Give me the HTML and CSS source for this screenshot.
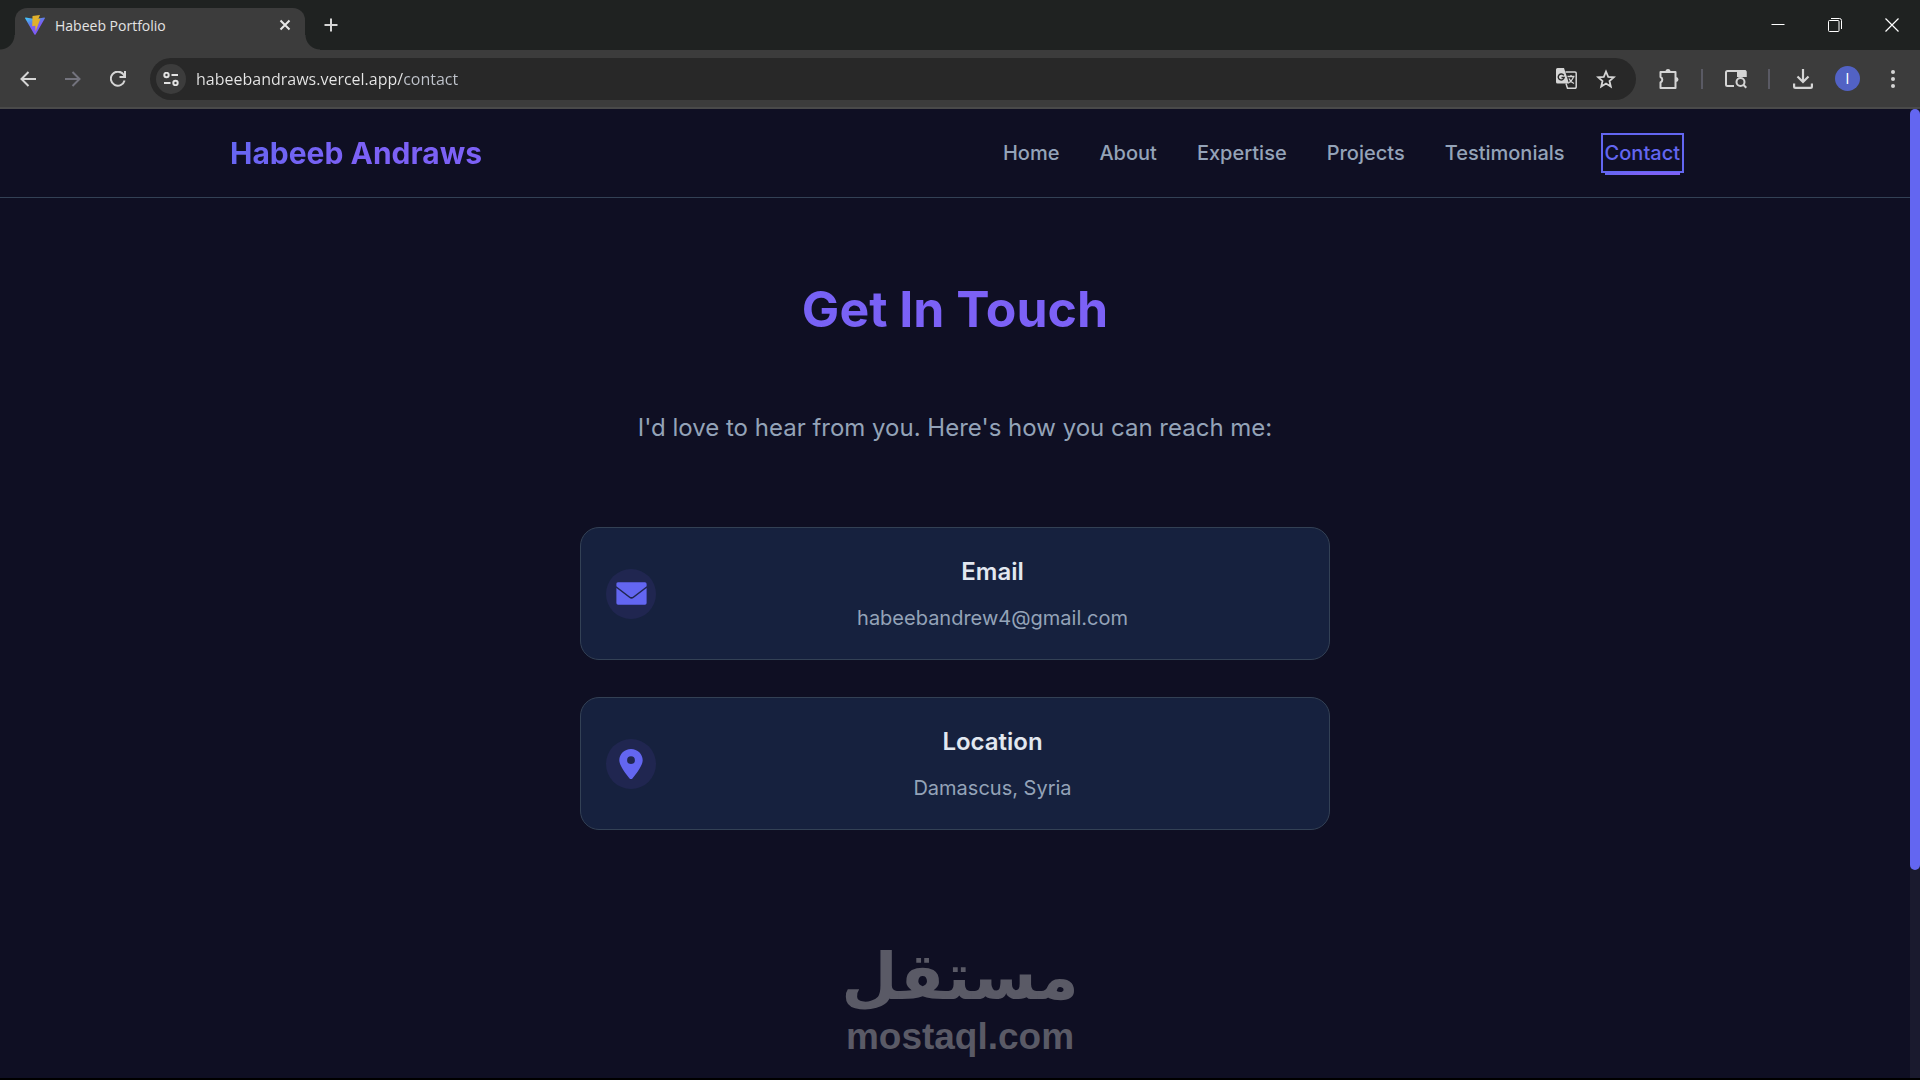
FILE: index.html
```html
<!DOCTYPE html>
<html lang="en">
<head>
    <meta charset="UTF-8">
    <meta name="viewport" content="width=device-width, initial-scale=1.0">
    <title>Habeeb Portfolio</title>
    <link rel="stylesheet" href="styles.css">
</head>
<body>
<div class="browser">
    <div class="tab-strip">
        <div class="tab">
            <svg class="tab-icon" width="20" height="20" viewBox="0 0 20 20">
                <defs>
                    <linearGradient id="vite" x1="0" y1="0" x2="0.5" y2="1">
                        <stop offset="0" stop-color="#41d1ff"/>
                        <stop offset="0.35" stop-color="#5a86e8"/>
                        <stop offset="0.6" stop-color="#7b5cf5"/>
                    </linearGradient>
                </defs>
                <path fill="url(#vite)" d="M0.5 2.5 L10 4 L19.5 2.5 Q20.3 2.5 19.8 3.5 L10.6 19.5 Q10 20.2 9.4 19.5 L0.2 3.5 Q-0.3 2.5 0.5 2.5Z"/>
                <path fill="#e0b02c" d="M7.5 1 L15 0 L13.3 4 L15.5 3.6 L10.5 16.5 L10.3 10.7 L7.2 11.2Z"/>
            </svg>
            <span class="tab-title">Habeeb Portfolio</span>
            <button class="tab-close" aria-label="Close tab">
                <svg width="12" height="12" viewBox="0 0 12 12"><path d="M1.5 1.5l9 9M10.5 1.5l-9 9" stroke="#e8e8e8" stroke-width="2"/></svg>
            </button>
        </div>
        <button class="new-tab" aria-label="New tab">
            <svg width="14" height="14" viewBox="0 0 14 14"><path d="M7 0.5v13M0.5 7h13" stroke="#d5d5d5" stroke-width="2"/></svg>
        </button>
        <div class="window-controls">
            <button aria-label="Minimize"><svg width="14" height="14" viewBox="0 0 14 14"><path d="M0.5 6.5h13" stroke="#fff"/></svg></button>
            <button aria-label="Restore"><svg width="14" height="14" viewBox="0 0 14 14" fill="none" stroke="#fff"><rect x="0.5" y="2.5" width="10.5" height="11" rx="1"/><path d="M3 0.5h8.5a2 2 0 0 1 2 2V11"/></svg></button>
            <button aria-label="Close"><svg width="14" height="14" viewBox="0 0 14 14"><path d="M0.5 0.5l13 13M13.5 0.5l-13 13" stroke="#fff" stroke-width="1.2"/></svg></button>
        </div>
    </div>

    <div class="toolbar">
        <button class="tool" aria-label="Back">
            <svg width="16" height="16" viewBox="0 0 16 16" fill="none" stroke="#d5d5d5" stroke-width="2"><path d="M16 8H1.5M8.5 1l-7 7 7 7"/></svg>
        </button>
        <button class="tool" aria-label="Forward">
            <svg width="16" height="16" viewBox="0 0 16 16" fill="none" stroke="#73737d" stroke-width="2"><path d="M0 8h14.5M7.5 1l7 7-7 7"/></svg>
        </button>
        <button class="tool" aria-label="Reload">
            <svg width="16" height="16" viewBox="0 0 16 16" fill="none" stroke="#d5d5d5" stroke-width="2"><path d="M14.6 9.5A7 7 0 1 1 13.5 3.5L14.5 5"/><path d="M15 0v6H9.5"/></svg>
        </button>
        <div class="omnibox">
            <button class="site-info" aria-label="Site information">
                <svg width="16" height="14" viewBox="0 0 16 14" fill="none" stroke="#e3e3e3" stroke-width="2"><circle cx="3.5" cy="3" r="2.2"/><path d="M8.5 3H15M1 11h6.5"/><circle cx="12.5" cy="11" r="2.2"/></svg>
            </button>
            <input class="url" type="text" aria-label="Address" value="habeebandraws.vercel.app/contact">
            <button class="omni-action" aria-label="Translate">
                <svg width="21" height="21" viewBox="0 0 21 21">
                    <path fill="#d5d5d5" d="M1.5 0H8l5 15.5H1.5A1.5 1.5 0 0 1 0 14V1.5A1.5 1.5 0 0 1 1.5 0Z"/>
                    <path fill="none" stroke="#d5d5d5" stroke-width="1.5" d="M9.5 4H19a1.2 1.2 0 0 1 1.2 1.2V19a1.2 1.2 0 0 1-1.2 1.2h-7.5L10 15.5"/>
                    <path fill="none" stroke="#282828" stroke-width="1.4" d="M7.8 7.4A3 3 0 1 0 8.2 9.5H5.5"/>
                    <path fill="none" stroke="#d5d5d5" stroke-width="1.3" d="M11.5 8.5h7M15 7v1.5M17.5 8.500c-.5 3-3 5-5 6.500M13 10.500c1 2.500 2.500 4 5 5"/>
                </svg>
            </button>
            <button class="omni-action" aria-label="Bookmark">
                <svg width="20" height="20" viewBox="0 0 20 20" fill="none" stroke="#d5d5d5" stroke-width="1.8"><path d="M10 2.5l2.200 5.300 5.600.5-4.300 3.700 1.300 5.600-4.800-3-4.800 3 1.300-5.600L2.200 8.300l5.600-.5Z"/></svg>
            </button>
        </div>
        <button class="tool" aria-label="Extensions">
            <svg width="22" height="22" viewBox="0 0 22 22"><path fill="none" stroke="#d5d5d5" stroke-width="2" stroke-linejoin="round" d="M2.5 4h15v16h-15v-5.500a3 3 0 0 0 0-5.500Z"/><path fill="#d5d5d5" d="M7.500 3.500a2.500 2.500 0 0 1 5 0ZM18 9a2.500 2.500 0 0 1 0 5Z"/></svg>
        </button>
        <span class="divider"></span>
        <button class="tool" aria-label="Side panel search">
            <svg width="22" height="20" viewBox="0 0 22 20" fill="none" stroke="#d5d5d5" stroke-width="2"><path d="M9 17H2.500A1.500 1.500 0 0 1 1 15.500v-12A1.500 1.500 0 0 1 2.500 2H19a1.500 1.500 0 0 1 1.500 1.500V8"/><path fill="#d5d5d5" stroke="none" d="M12 1h8a1.500 1.500 0 0 1 1.500 1.500V8H12Z"/><circle cx="15.500" cy="13" r="4"/><path d="M18.300 15.800l3 3"/></svg>
        </button>
        <span class="divider"></span>
        <button class="tool" aria-label="Downloads">
            <svg width="20" height="20" viewBox="0 0 20 20" fill="none" stroke="#d5d5d5" stroke-width="2.2"><path d="M10 0v13M4.5 7.5L10 13l5.500-5.500M1.100 14.500v3a1.400 1.400 0 0 0 1.400 1.400h15a1.400 1.400 0 0 0 1.400-1.400v-3"/></svg>
        </button>
        <button class="tool" aria-label="Profile"><span class="avatar">I</span></button>
        <button class="tool" aria-label="Menu">
            <svg width="4" height="18" viewBox="0 0 4 18" fill="#d5d5d5"><circle cx="2" cy="2" r="2"/><circle cx="2" cy="9" r="2"/><circle cx="2" cy="16" r="2"/></svg>
        </button>
    </div>

    <div class="viewport">
        <div class="page">
            <header class="header">
                <div class="header-inner">
                    <a href="#" class="logo">Habeeb Andraws</a>
                    <nav class="nav">
                        <a href="#">Home</a>
                        <a href="#">About</a>
                        <a href="#">Expertise</a>
                        <a href="#">Projects</a>
                        <a href="#">Testimonials</a>
                        <a href="#" class="active">Contact</a>
                    </nav>
                </div>
            </header>

            <main class="contact">
                <h1 class="contact-title">Get In Touch</h1>
                <p class="contact-intro">I'd love to hear from you. Here's how you can reach me:</p>

                <div class="contact-list">
                    <div class="contact-card">
                        <span class="contact-icon">
                            <svg width="31" height="31" viewBox="0 0 24 24" fill="currentColor"><path d="M0.3 4.8A1.3 1.3 0 0 1 1.6 3.300h20.800a1.300 1.300 0 0 1 1.300 1.300v1.700l-10.400 8a2.200 2.200 0 0 1-2.600 0L.3 6.300Z"/><path d="M.3 7.700l9.900 7.600a3 3 0 0 0 3.600 0l9.900-7.600v11.700a1.300 1.300 0 0 1-1.300 1.300H1.600a1.300 1.300 0 0 1-1.300-1.300Z"/></svg>
                        </span>
                        <div class="contact-details">
                            <h2>Email</h2>
                            <p>habeebandrew4@gmail.com</p>
                        </div>
                    </div>
                    <div class="contact-card">
                        <span class="contact-icon">
                            <svg width="24" height="30" viewBox="0 0 24 30" fill="currentColor"><path fill-rule="evenodd" d="M12 0C5.400 0 .3 5 .3 11.300c0 5.200 6.300 13.200 10.300 18.200a1.800 1.800 0 0 0 2.800 0c4-5 10.300-13 10.300-18.200C23.700 5 18.600 0 12 0Zm0 7.300a3.900 3.900 0 1 1 0 7.800 3.900 3.900 0 0 1 0-7.800Z"/></svg>
                        </span>
                        <div class="contact-details">
                            <h2>Location</h2>
                            <p>Damascus, Syria</p>
                        </div>
                    </div>
                </div>
            </main>
        </div>
        <div class="scrollbar"><div class="scrollbar-thumb"></div></div>
    </div>

    <div class="watermark">
        <span class="watermark-ar" lang="ar" dir="rtl">مستقل</span>
        <span class="watermark-en">mostaql.com</span>
    </div>
</div>
</body>
</html>
```
FILE: styles.css
```css
:root {
    --primary: #6366f1;
    --secondary: #7c61f6;
    --bg: #0f0f23;
    --card: #16213e;
    --border: #334155;
    --text: #e2e8f0;
    --muted: #94a3b8;
    --chrome-dark: #1f2221;
    --chrome: #3c3c3c;
    --gradient: linear-gradient(135deg, var(--primary), var(--secondary) 50%);
}

* {
    box-sizing: border-box;
    margin: 0;
    padding: 0;
}

body {
    font-family: Inter, "Liberation Sans", sans-serif;
    background: #000;
    color: var(--text);
}

a {
    text-decoration: none;
}

button {
    display: flex;
    align-items: center;
    justify-content: center;
    border: none;
    background: none;
}

/* Browser window */
.browser {
    position: relative;
    display: flex;
    flex-direction: column;
    height: 100vh;
    padding-bottom: 2px;
    overflow: hidden;
}

.tab-strip {
    display: flex;
    height: 50px;
    padding-left: 15px;
    background: var(--chrome-dark);
}

.tab {
    position: relative;
    display: flex;
    align-items: center;
    width: 290px;
    margin-top: 8px;
    padding: 0 10px 8px;
    border-radius: 12px 12px 0 0;
    background: var(--chrome);
}

.tab::before,
.tab::after {
    content: "";
    position: absolute;
    bottom: 0;
    width: 15px;
    height: 15px;
}

.tab::before {
    right: 100%;
    background: radial-gradient(circle at 0 0, transparent 14px, var(--chrome) 15px);
}

.tab::after {
    left: 100%;
    background: radial-gradient(circle at 100% 0, transparent 14px, var(--chrome) 15px);
}

.tab-title {
    flex: 1;
    margin-left: 10px;
    font: 14px "Open Sans", "Noto Sans", sans-serif;
    color: #e3e3e3;
}

.tab-close {
    width: 20px;
    height: 20px;
}

.new-tab {
    width: 30px;
    margin-left: 11px;
}

.window-controls {
    display: flex;
    margin-left: auto;
}

.window-controls button {
    width: 57px;
}

.toolbar {
    display: flex;
    align-items: center;
    height: 59px;
    padding: 0 5px;
    background: var(--chrome);
    border-bottom: 2px solid #4a4a4a;
}

.tool {
    width: 45px;
    height: 42px;
}

.omnibox {
    display: flex;
    align-items: center;
    flex: 1;
    height: 42px;
    margin: 0 10px;
    padding: 0 10px 0 6px;
    border-radius: 21px;
    background: #282828;
}

.site-info {
    width: 30px;
    height: 30px;
    border-radius: 50%;
    background: var(--chrome);
}

.url {
    flex: 1;
    height: 30px;
    margin-left: 10px;
    border: none;
    outline: none;
    font: 16px "Open Sans", "Noto Sans", sans-serif;
    color: transparent;
    /* the path is dimmer than the host */
    background: linear-gradient(to right, #e8e8e8 208px, #c0c4cc 208px);
    background-clip: text;
    -webkit-background-clip: text;
}

.omni-action {
    width: 40px;
    height: 30px;
}

.divider {
    width: 2px;
    height: 20px;
    margin: 0 10px;
    background: #5a5a64;
}

.avatar {
    width: 25px;
    border-radius: 50%;
    background: #5262c4;
    font: 14px/25px Inter, sans-serif;
    color: #fff;
}

/* Page */
.viewport {
    display: flex;
    flex: 1;
    min-height: 0;
    background: var(--bg);
}

.page {
    flex: 1;
}

.header {
    border-bottom: 1px solid var(--border);
}

.header-inner {
    display: flex;
    align-items: center;
    justify-content: space-between;
    max-width: 1500px;
    height: 88px;
    margin: 0 auto;
    padding: 0 25px;
}

.logo {
    font-size: 30px;
    font-weight: 700;
    background: var(--gradient);
    background-clip: text;
    -webkit-background-clip: text;
    color: transparent;
}

.nav {
    display: flex;
    gap: 40px;
}

.nav a {
    position: relative;
    font-size: 20px;
    font-weight: 500;
    line-height: 32px;
    color: var(--muted);
}

.nav .active {
    color: var(--primary);
    outline: 2px solid var(--primary);
    outline-offset: 2px;
}

.nav .active::after {
    content: "";
    position: absolute;
    left: 0;
    bottom: -6px;
    width: 100%;
    height: 3px;
    background: var(--gradient);
}

.contact {
    max-width: 1500px;
    margin: 0 auto;
    padding: 80px 25px;
    text-align: center;
}

.contact-title {
    font-size: 50px;
    font-weight: 700;
    line-height: 62px;
    background: var(--gradient);
    background-clip: text;
    -webkit-background-clip: text;
    color: transparent;
}

.contact-intro {
    margin-top: 68px;
    font-size: 24px;
    line-height: 40px;
    color: var(--muted);
}

.contact-list {
    display: flex;
    flex-direction: column;
    gap: 37px;
    max-width: 750px;
    margin: 79px auto 0;
}

.contact-card {
    display: flex;
    align-items: center;
    gap: 25px;
    padding: 25px;
    border: 1px solid var(--border);
    border-radius: 19px;
    background: var(--card);
}

.contact-icon {
    display: flex;
    align-items: center;
    justify-content: center;
    width: 50px;
    height: 50px;
    border-radius: 50%;
    background: #202650;
    color: var(--primary);
}

.contact-details {
    flex: 1;
}

.contact-details h2 {
    margin-bottom: 11px;
    font-size: 24px;
    font-weight: 600;
    line-height: 38px;
}

.contact-details p {
    font-size: 20px;
    line-height: 32px;
    color: var(--muted);
}

.scrollbar {
    width: 10px;
    background: #1a1a2e;
}

.scrollbar-thumb {
    height: 78.5%;
    border-radius: 5px;
    background: var(--primary);
}

/* Watermark over the window */
.watermark {
    position: absolute;
    left: 0;
    right: 0;
    bottom: 22px;
    display: flex;
    flex-direction: column;
    align-items: center;
    color: #5a5a66;
    font-weight: 700;
    pointer-events: none;
}

.watermark-ar {
    font-family: "DejaVu Sans", sans-serif;
    font-size: 65px;
    line-height: 78px;
}

.watermark-en {
    font-family: "Liberation Sans", Arial, sans-serif;
    font-size: 37px;
    line-height: 42px;
}
```
